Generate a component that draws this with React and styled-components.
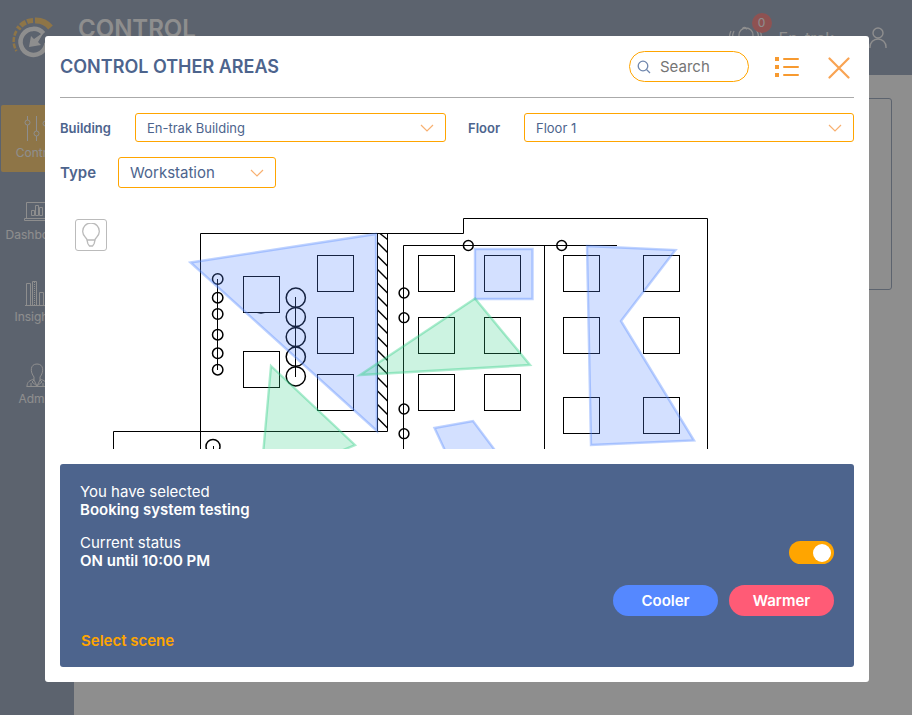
import React from "react";
import styled, { createGlobalStyle } from "styled-components";

const navy = "#4d648d";
const amber = "#ffa500";

const GlobalStyle = createGlobalStyle`
  * { box-sizing: border-box; }
  body { margin: 0; font-family: Inter, sans-serif; color: ${navy}; background: #fff; }
  button, input, select { font-family: inherit; color: inherit; }
  h1, h2, p { margin: 0; }
`;

const Page = styled.div`
  min-height: 100vh;
  display: flex;
  flex-direction: column;
`;

const TopBar = styled.header`
  height: 75px;
  display: flex;
  align-items: flex-start;
  background: ${navy};
  color: #fff;
`;

const Logo = styled.svg`
  width: 46px;
  height: 46px;
  margin: 15px 20px 0 12px;
`;

const PageTitle = styled.h1`
  flex: 1;
  padding-top: 14px;
  font-size: 24px;
  line-height: 30px;
  font-weight: 600;
`;

const Account = styled.div`
  display: flex;
  align-items: center;
  gap: 16px;
  padding: 24px 24px 0 0;
  font-size: 16px;
  line-height: 28px;
`;

const Bell = styled.div`
  position: relative;
  width: 34px;
  height: 28px;
`;

const Badge = styled.span`
  position: absolute;
  top: -11px;
  right: -9px;
  width: 20px;
  height: 20px;
  border-radius: 50%;
  background: #ff2a2a;
  font-size: 12px;
  line-height: 20px;
  text-align: center;
`;

const UserName = styled.span`
  margin-right: 18px;
`;

const Body = styled.div`
  flex: 1;
  display: flex;
`;

const SideNav = styled.nav`
  width: 74px;
  padding-top: 30px;
  display: flex;
  flex-direction: column;
  gap: 15px;
  background: ${navy};
`;

const NavItem = styled.a`
  height: 67px;
  margin-left: 1px;
  padding: 8px 2px 0 0;
  display: flex;
  flex-direction: column;
  align-items: center;
  gap: 2px;
  border-radius: 2px;
  color: #fff;
  background: ${(p) => (p.$active ? amber : "transparent")};
  font-size: 12px;
  line-height: 16px;
  text-decoration: none;
  svg { width: 32px; height: 30px; }
`;

const Main = styled.main`
  flex: 1;
  padding: 23px 20px;
`;

const Card = styled.div`
  height: 192px;
  border: 1px solid ${navy};
  border-radius: 3px;
`;

const Backdrop = styled.div`
  position: fixed;
  inset: 0;
  padding: 36px 43px 33px 45px;
  overflow: auto;
  background: rgba(98, 98, 98, 0.72);
`;

const Dialog = styled.section`
  padding: 15px;
  border-radius: 3px;
  background: #fff;
`;

const DialogHead = styled.div`
  height: 47px;
  margin-bottom: 15px;
  padding-right: 4px;
  display: flex;
  align-items: flex-start;
  border-bottom: 1px solid #aaa;
`;

const DialogTitle = styled.h2`
  flex: 1;
  font-size: 18px;
  line-height: 31px;
  font-weight: 600;
`;

const SearchBox = styled.label`
  width: 120px;
  height: 31px;
  margin-right: 26px;
  padding: 0 8px 0 7px;
  display: flex;
  align-items: center;
  gap: 9px;
  border: 1px solid ${amber};
  border-radius: 16px;
  svg { flex: none; }
`;

const SearchInput = styled.input`
  width: 100%;
  min-width: 0;
  padding: 0;
  border: 0;
  outline: 0;
  background: none;
  font-size: 15px;
  line-height: 20px;
  &::placeholder { color: #757575; opacity: 1; }
`;

const IconButton = styled.button`
  height: ${(p) => (p.$gap ? 34 : 32)}px;
  margin-left: ${(p) => p.$gap || 0}px;
  padding: 0;
  display: flex;
  align-items: center;
  border: 0;
  background: none;
`;

const Filters = styled.div`
  display: grid;
  grid-template-columns: 75px 311fr 78px 330fr;
  align-items: center;
  margin-bottom: 15px;
`;

const TypeRow = styled.div`
  display: grid;
  grid-template-columns: 58px 158px;
  align-items: center;
  margin-bottom: 16px;
`;

const FieldLabel = styled.label`
  padding-left: ${(p) => p.$inset || 0}px;
  font-size: ${(p) => (p.$large ? 15 : 13)}px;
  font-weight: 600;
`;

const SelectWrap = styled.div`
  display: grid;
  align-items: center;
  > * { grid-area: 1 / 1; }
  svg { justify-self: end; margin-right: 12px; pointer-events: none; }
`;

const Select = styled.select`
  width: 100%;
  height: ${(p) => (p.$large ? 31 : 29)}px;
  padding: 0 11px;
  appearance: none;
  border: 1px solid ${amber};
  border-radius: 3px;
  background: #fff;
  font-size: ${(p) => (p.$large ? 15 : 13)}px;
`;

const MapArea = styled.div`
  display: grid;
  margin-bottom: 15px;
  > * { grid-area: 1 / 1; }
`;

const Plan = styled.svg`
  display: block;
  width: 100%;
`;

const LightButton = styled.button`
  z-index: 1;
  width: 32px;
  height: 32px;
  margin: 15px;
  padding: 0;
  display: flex;
  align-items: center;
  justify-content: center;
  border: 1px solid #bbb;
  border-radius: 3px;
  background: #fff;
`;

const Panel = styled.div`
  padding: 19px 20px 16px;
  border-radius: 3px;
  background: ${navy};
  color: #fff;
  font-size: 15px;
  line-height: 18px;
`;

const Strong = styled.p`
  font-weight: 600;
`;

const StatusRow = styled.div`
  margin-top: 15px;
  margin-bottom: 15px;
  display: flex;
  align-items: center;
  justify-content: space-between;
`;

const Toggle = styled.input`
  appearance: none;
  width: 45px;
  height: 23px;
  margin: 1px 0 0;
  display: flex;
  align-items: center;
  justify-content: flex-end;
  padding-right: 3px;
  border-radius: 12px;
  background: ${amber};
  &::before {
    content: "";
    width: 18px;
    height: 18px;
    border-radius: 50%;
    background: #fff;
  }
`;

const Actions = styled.div`
  display: flex;
  justify-content: flex-end;
  gap: 11px;
`;

const Pill = styled.button`
  width: 105px;
  height: 31px;
  padding: 0;
  border: 0;
  border-radius: 16px;
  background: ${(p) => p.$tone};
  color: #fff;
  font-size: 15px;
  font-weight: 600;
`;

const SceneButton = styled.button`
  display: block;
  margin-top: 15px;
  padding: 0 1px;
  border: 0;
  background: none;
  color: ${amber};
  font-size: 15px;
  line-height: 20px;
  font-weight: 600;
`;

const Chevron = () => (
  <svg width="14" height="8" viewBox="0 0 14 8" fill="none" stroke="#f8b070" strokeWidth="1.2">
    <path d="M1 1l6 6 6-6" />
  </svg>
);

function Picker({ id, value, large }) {
  return (
    <SelectWrap>
      <Select id={id} $large={large} defaultValue={value}>
        <option>{value}</option>
      </Select>
      <Chevron />
    </SelectWrap>
  );
}

const desks = [
  [243.5, 276.5], [243.5, 351.5],
  [317.5, 255.5], [317.5, 317.5], [317.5, 374.5],
  [418.5, 255.5], [418.5, 317.5], [418.5, 374.5],
  [484.5, 255.5], [484.5, 317.5], [484.5, 374.5],
  [563.5, 255.5], [563.5, 317.5], [563.5, 397.5],
  [643.5, 255.5], [643.5, 317.5], [643.5, 397.5],
];
const hatches = Array.from({ length: 14 }, (_, i) => 242.5 + i * 13.5);
const smallLamps = [279, 297.7, 314, 334.7, 353.3, 369.7];
const largeLamps = [297.7, 317, 337, 356.7, 376.3];
const sensors = [[404, 293], [404, 317.7], [404, 409], [404, 433.7], [468.3, 245.5], [561.7, 245.5]];

function FloorPlan() {
  return (
    <Plan viewBox="60 204 794 245" role="img" aria-label="Floor 1 plan">
      <g fill="none" stroke="#000">
        <path d="M200.5 449V233.5H463.5V218.5H707.5V449" />
        <path d="M113.5 449V431.5H387.5V233.5M377.5 233.5V431.5" />
        <path d="M403.5 449V245.5H617M544.5 245.5V449" />
        <path strokeWidth="1.4" d="M380 233.5l7.5 6" />
        {hatches.map((y) => <path key={y} strokeWidth="1.4" d={`M377.5 ${y}l10 10`} />)}
        {desks.map(([x, y]) => <rect key={`${x}-${y}`} x={x} y={y} width="36" height="36" />)}
        <path d="M257 312.5q4 1.6 8 0" />
        <g strokeWidth="1.5">
          <path strokeWidth="1" d="M217.5 279V370M295.5 297V377M213.5 446v3" />
          {smallLamps.map((y) => <circle key={y} cx="217.7" cy={y} r="5.2" />)}
          {largeLamps.map((y) => <circle key={y} cx="295.8" cy={y} r="9.6" />)}
          {sensors.map(([x, y]) => <circle key={`${x}-${y}`} cx={x} cy={y} r="4.9" />)}
          <circle cx="213" cy="446.5" r="7" />
        </g>
      </g>
      <g fill="#5588ff" fillOpacity="0.26" stroke="#5588ff" strokeOpacity="0.38" strokeWidth="2.4">
        <path d="M190.5 262.5L376 234L377 431Z" />
        <path d="M475 249H532.5V299H475Z" />
        <path d="M587 246L675.5 250L621 321L694 440.5L591 445Z" />
        <path d="M434.5 428L473 421L500 457L448 457Z" />
      </g>
      <g fill="#33cf87" fillOpacity="0.25" stroke="#33cf87" strokeOpacity="0.4" strokeWidth="2.4">
        <path d="M271 366L355 445L320 460L262.5 460Z" />
        <path d="M475 298.5L530 365L360 375Z" />
      </g>
    </Plan>
  );
}

export default function App() {
  return (
    <>
      <GlobalStyle />
      <Page>
        <TopBar>
          <Logo viewBox="0 0 46 46" fill="none">
            <path d="M23 5.500A19 19 0 0 1 38.500 12.500" stroke={amber} strokeWidth="6" />
            <path d="M21 5.500A19 19 0 0 0 6 14" stroke={amber} strokeWidth="5" strokeDasharray="6 1.500" />
            <path d="M4.500 16A19 19 0 0 0 4.500 36" stroke={amber} strokeWidth="2.500" strokeDasharray="5 1.500" />
            <path d="M31.500 18.500A13 13 0 1 0 34.500 28" stroke="#fff" strokeWidth="4.500" />
            <path d="M17 32l2-11 3 3 10-7-6 10 3 3z" fill="#fff" />
          </Logo>
          <PageTitle>CONTROL</PageTitle>
          <Account>
            <Bell>
              <svg width="34" height="28" viewBox="0 0 34 28" fill="none" stroke="#fff" strokeWidth="1.3">
                <path d="M8 20c3-3 2-6 2-9a6 6 0 0 1 14 0c0 3-1 6 2 9zM13.500 5.500a2 2 0 0 1 4 0M5 7q-3 6 0 12M2 7q-3 6 0 13M28 7q3 6 0 12M31 7q3 6 0 13" />
              </svg>
              <Badge>0</Badge>
            </Bell>
            <UserName>En-trak</UserName>
            <svg width="20" height="24" viewBox="0 0 20 24" fill="none" stroke="#fff" strokeWidth="1.4">
              <circle cx="10" cy="7" r="5" />
              <path d="M2 22v-1a8 8 0 0 1 16 0v1" />
            </svg>
          </Account>
        </TopBar>
        <Body>
          <SideNav>
            <NavItem href="#control" $active>
              <svg viewBox="0 0 32 30" fill="none" stroke="#fff">
                <path d="M6.500 3v4m0 5v16M15.500 3v15m0 5v5M24.500 3v5m0 5v15" />
                <circle cx="6.500" cy="9.500" r="2.500" /><circle cx="15.500" cy="20.500" r="2.500" /><circle cx="24.500" cy="10.500" r="2.500" />
              </svg>
              Control
            </NavItem>
            <NavItem href="#dashboard">
              <svg viewBox="0 0 32 30" fill="none" stroke="#fff">
                <path d="M5.500 23.500V7.500h22v16M3.500 23.500h26v2h-26zM10.500 20.500v-5h3v5zM14.500 20.500v-10h3v10zM18.500 20.500v-8h3v8z" />
              </svg>
              Dashboard
            </NavItem>
            <NavItem href="#insights">
              <svg viewBox="0 0 32 30" fill="none" stroke="#fff">
                <path d="M4 28.500h26M5.500 28V6.500h4V28M11.500 28V4.500h4V28M18.500 28V15.500h4V28M24.500 28V12.500h4V28" />
                <path d="M13.500 5v23" strokeDasharray="1 1" />
              </svg>
              Insights
            </NavItem>
            <NavItem href="#admin">
              <svg viewBox="0 0 32 30" fill="none" stroke="#fff">
                <path d="M13 18c-4-5-4-13 3-13s7 8 3 13v3l-3 6-3-6zM6 27.500c0-5 3-6 7-7.500M26 27.500c0-5-3-6-7-7.500M5.500 27.500h21M10 27v-3M22 27v-3M13 21l-2 2 5 4 5-4-2-2" />
              </svg>
              Admin
            </NavItem>
          </SideNav>
          <Main><Card /></Main>
        </Body>
      </Page>

      <Backdrop>
        <Dialog role="dialog" aria-modal="true" aria-labelledby="areas-title">
          <DialogHead>
            <DialogTitle id="areas-title">CONTROL OTHER AREAS</DialogTitle>
            <SearchBox>
              <svg width="14" height="14" viewBox="0 0 14 14" fill="none" stroke="#6f86ad" strokeWidth="1.3">
                <circle cx="6" cy="6" r="4.8" /><path d="M9.500 9.500L13 13" />
              </svg>
              <SearchInput type="search" placeholder="Search" aria-label="Search" />
            </SearchBox>
            <IconButton aria-label="List view">
              <svg width="24" height="20" viewBox="0 0 24 20" fill="#f79a30">
                <path d="M0 0h4v4H0zM0 8h4v4H0zM0 16h4v4H0z" />
                <path d="M9 2h14M9 10h14M9 18h14" stroke="#f79a30" strokeWidth="2" strokeLinecap="round" />
              </svg>
            </IconButton>
            <IconButton $gap={29} aria-label="Close">
              <svg width="22" height="22" viewBox="0 0 22 22" stroke="#f9a352" strokeWidth="2.2" strokeLinecap="round">
                <path d="M1.500 1.500l19 19M20.500 1.500l-19 19" />
              </svg>
            </IconButton>
          </DialogHead>
          <Filters>
            <FieldLabel htmlFor="building">Building</FieldLabel>
            <Picker id="building" value="En-trak Building" />
            <FieldLabel htmlFor="floor" $inset={22}>Floor</FieldLabel>
            <Picker id="floor" value="Floor 1" />
          </Filters>
          <TypeRow>
            <FieldLabel htmlFor="type" $large>Type</FieldLabel>
            <Picker id="type" value="Workstation" large />
          </TypeRow>
          <MapArea>
            <FloorPlan />
            <LightButton aria-label="Lighting">
              <svg width="20" height="24" viewBox="0 0 20 24" fill="none" stroke="#bbb" strokeWidth="1.300">
                <path d="M6 17q0-1-1.500-2.500a8.300 8.300 0 1 1 11 0Q14 16 14 17zM6 17l.8 3.500L8.500 23h3l1.700-2.500L14 17" />
              </svg>
            </LightButton>
          </MapArea>
          <Panel>
            <p>You have selected</p>
            <Strong>Booking system testing</Strong>
            <StatusRow>
              <div>
                <p>Current status</p>
                <Strong>ON until 10:00 PM</Strong>
              </div>
              <Toggle type="checkbox" role="switch" defaultChecked aria-label="Power" />
            </StatusRow>
            <Actions>
              <Pill $tone="#5588ff">Cooler</Pill>
              <Pill $tone="#ff5b76">Warmer</Pill>
            </Actions>
            <SceneButton>Select scene</SceneButton>
          </Panel>
        </Dialog>
      </Backdrop>
    </>
  );
}
